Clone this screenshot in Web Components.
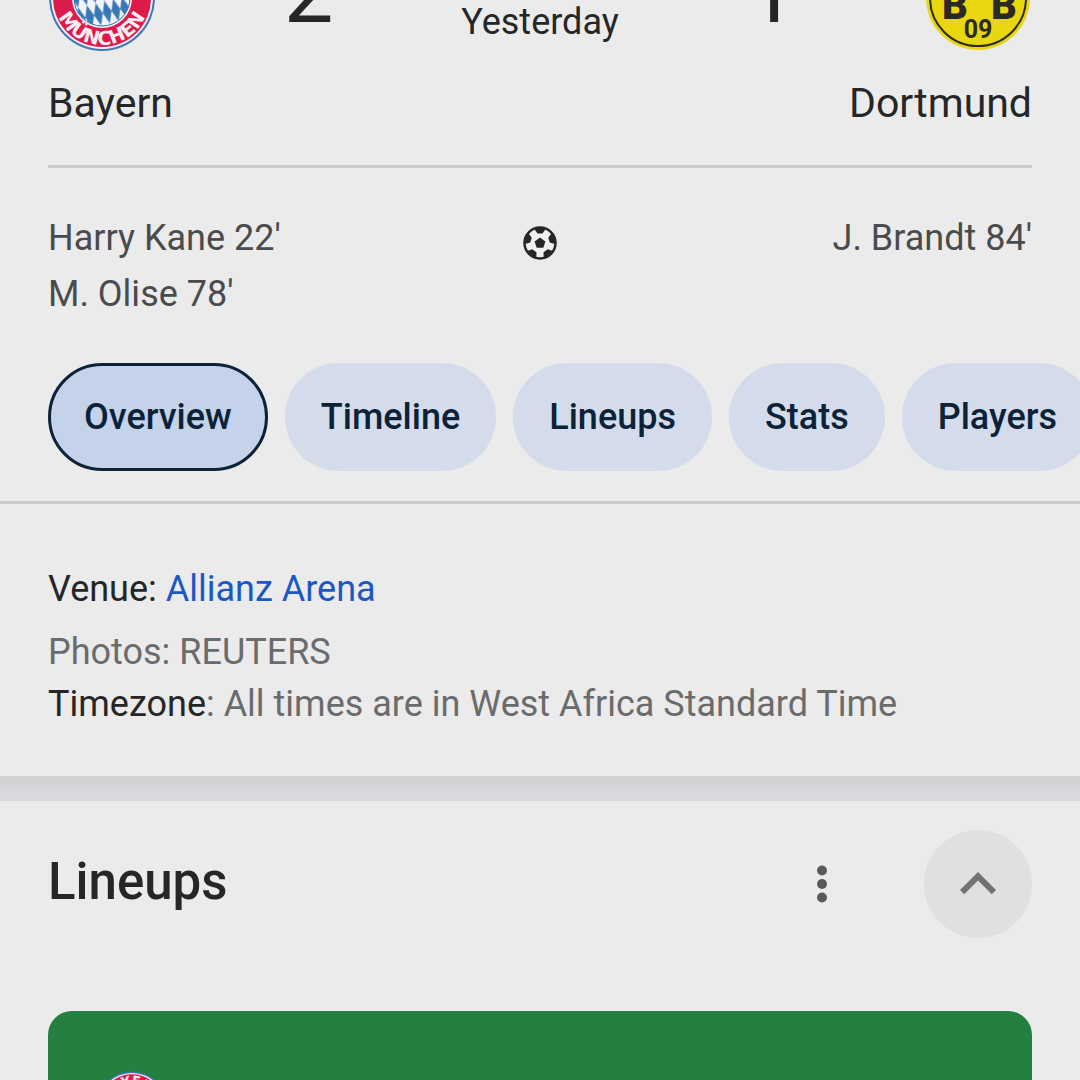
<!DOCTYPE html>
<html lang="en">
<head>
  <meta charset="utf-8">
  <meta name="viewport" content="width=device-width, initial-scale=1">
  <title>Bayern - Dortmund</title>
  <style>
    body {
      margin: 0;
      height: 100vh;
      overflow: hidden;
      background: #ebebeb;
      color: #252627;
      font-family: Roboto, "Liberation Sans", sans-serif;
      font-size: 36px;
    }
  </style>
</head>
<body>
  <match-header>
    <bayern-crest slot="home-crest"></bayern-crest>
    <span slot="home-score">2</span>
    <span slot="day">Yesterday</span>
    <span slot="away-score">1</span>
    <dortmund-crest slot="away-crest"></dortmund-crest>
    <span slot="home-name">Bayern</span>
    <span slot="away-name">Dortmund</span>
  </match-header>

  <goal-list>
    <div slot="home">Harry Kane 22'</div>
    <div slot="home">M. Olise 78'</div>
    <div slot="away">J. Brandt 84'</div>
  </goal-list>

  <tab-bar>
    <tab-chip selected>Overview</tab-chip>
    <tab-chip>Timeline</tab-chip>
    <tab-chip>Lineups</tab-chip>
    <tab-chip>Stats</tab-chip>
    <tab-chip>Players</tab-chip>
  </tab-bar>

  <match-info></match-info>

  <lineup-section>
    <span slot="title">Lineups</span>
    <bayern-crest slot="team"></bayern-crest>
  </lineup-section>

  <script>
    class BayernCrest extends HTMLElement {
      constructor() {
        super();
        const shadow = this.attachShadow({ mode: 'open' });
        shadow.innerHTML = `
          <style>
            :host { display: block; width: 108px; height: 108px; }
            svg { display: block; width: 100%; height: 100%; }
            text {
              font-family: "DejaVu Sans", sans-serif;
              font-weight: 700;
              font-size: 19px;
              fill: #fbeef2;
            }
          </style>
          <svg viewBox="0 0 108 108" role="img" aria-label="Bayern crest">
            <defs>
              <clipPath id="core"><circle cx="54" cy="54" r="28"/></clipPath>
              <pattern id="lozenge" width="9" height="23" patternUnits="userSpaceOnUse" patternTransform="translate(52 58) rotate(-14)">
                <rect width="9" height="23" fill="#f2f4f8"/>
                <path d="M4.500 0 9 11.500 4.500 23 0 11.500Z" fill="#3878b8"/>
              </pattern>
              <path id="top" d="M21 54a33 33 0 0 1 66 0"/>
              <path id="bottom" d="M7 54a47 47 0 0 0 94 0"/>
            </defs>
            <circle cx="54" cy="54" r="53" fill="#3f78b8"/>
            <circle cx="54" cy="54" r="51" fill="#f2eef2"/>
            <circle cx="54" cy="54" r="49" fill="#dc1a4c"/>
            <circle cx="54" cy="54" r="30" fill="#f2eef2"/>
            <g clip-path="url(#core)"><rect x="24" y="24" width="60" height="60" fill="url(#lozenge)"/></g>
            <circle cx="54" cy="54" r="28" fill="none" stroke="#3878b8" stroke-width="1"/>
            <text text-anchor="middle"><textPath href="#top" startOffset="50%">BAYERN</textPath></text>
            <text text-anchor="middle"><textPath href="#bottom" startOffset="50%">MÜNCHEN</textPath></text>
          </svg>
        `;
      }
    }

    class DortmundCrest extends HTMLElement {
      constructor() {
        super();
        const shadow = this.attachShadow({ mode: 'open' });
        shadow.innerHTML = `
          <style>
            :host { display: block; width: 108px; height: 108px; }
            svg { display: block; width: 100%; height: 100%; }
            text {
              font-family: Roboto, "Liberation Sans", sans-serif;
              font-weight: 700;
              fill: #2c2922;
              text-anchor: middle;
            }
            .club { font-size: 40px; font-weight: 900; }
            .year { font-size: 25px; }
          </style>
          <svg viewBox="0 0 108 108" role="img" aria-label="Dortmund crest">
            <circle cx="54" cy="54" r="52" fill="#e8d70f"/>
            <circle cx="54" cy="54" r="48" fill="#e8d70f" stroke="#2c2922" stroke-width="2"/>
            <text class="club" x="31" y="75">B</text>
            <text class="club" x="54" y="56">V</text>
            <text class="club" x="80" y="75">B</text>
            <text class="year" x="54" y="94">09</text>
          </svg>
        `;
      }
    }

    // Score row with both crests, team names below
    class MatchHeader extends HTMLElement {
      constructor() {
        super();
        const shadow = this.attachShadow({ mode: 'open' });
        shadow.innerHTML = `
          <style>
            :host { display: block; margin: -56px 48px 0; border-bottom: 3px solid #c9cbce; }
            .score {
              display: grid;
              grid-template-columns: 108px 1fr auto 1fr 108px;
              grid-template-rows: 108px;
              align-items: end;
            }
            .goals { text-align: center; font-size: 88px; line-height: 120px; }
            .day { line-height: 60px; }
            .names {
              display: flex;
              justify-content: space-between;
              padding: 27px 0 38px;
              font-size: 41px;
              line-height: 48px;
            }
          </style>
          <div class="score">
            <slot name="home-crest"></slot>
            <div class="goals"><slot name="home-score"></slot></div>
            <div class="day"><slot name="day"></slot></div>
            <div class="goals"><slot name="away-score"></slot></div>
            <slot name="away-crest"></slot>
          </div>
          <div class="names">
            <slot name="home-name"></slot>
            <slot name="away-name"></slot>
          </div>
        `;
      }
    }

    class GoalList extends HTMLElement {
      constructor() {
        super();
        const shadow = this.attachShadow({ mode: 'open' });
        shadow.innerHTML = `
          <style>
            :host {
              display: grid;
              grid-template-columns: 1fr auto 1fr;
              padding: 42px 48px 41px;
              color: #4a4b4d;
              line-height: 56px;
            }
            .away { text-align: right; }
            svg { display: block; width: 36px; height: 36px; margin-top: 15px; }
          </style>
          <div><slot name="home"></slot></div>
          <svg viewBox="0 0 36 36" aria-hidden="true">
            <defs><clipPath id="ball"><circle cx="18" cy="18" r="16"/></clipPath></defs>
            <circle cx="18" cy="18" r="15" fill="#f1f1f1"/>
            <path fill="#252627" d="M18 12.500l5.400 4-2.100 6.200h-6.600l-2.100-6.200z"/>
            <g fill="#252627" clip-path="url(#ball)">
              <path id="patch" d="M13 0h10v5l-2.500 3.500h-5L13 5z"/>
              <use href="#patch" transform="rotate(72 18 18)"/>
              <use href="#patch" transform="rotate(144 18 18)"/>
              <use href="#patch" transform="rotate(216 18 18)"/>
              <use href="#patch" transform="rotate(288 18 18)"/>
            </g>
            <circle cx="18" cy="18" r="15.500" fill="none" stroke="#252627" stroke-width="2.500"/>
          </svg>
          <div class="away"><slot name="away"></slot></div>
        `;
      }
    }

    class TabBar extends HTMLElement {
      constructor() {
        super();
        const shadow = this.attachShadow({ mode: 'open' });
        shadow.innerHTML = `
          <style>
            :host { display: block; overflow: hidden; border-bottom: 3px solid #c9cbce; }
            nav { display: flex; gap: 17px; padding: 0 48px 30px; }
          </style>
          <nav aria-label="Match"><slot></slot></nav>
        `;
      }
    }

    class TabChip extends HTMLElement {
      constructor() {
        super();
        const shadow = this.attachShadow({ mode: 'open' });
        shadow.innerHTML = `
          <style>
            :host { display: block; flex: none; }
            button {
              display: block;
              height: 108px;
              padding: 0 33px;
              border: 3px solid transparent;
              border-radius: 54px;
              background: #d4dbea;
              color: #0b2238;
              font: inherit;
              font-weight: 500;
              white-space: nowrap;
            }
            :host([selected]) button { background: #c5d3ea; border-color: #0b2238; }
          </style>
          <button type="button"><slot></slot></button>
        `;
      }
    }

    class MatchInfo extends HTMLElement {
      constructor() {
        super();
        const shadow = this.attachShadow({ mode: 'open' });
        shadow.innerHTML = `
          <style>
            :host { display: block; padding: 49px 48px 47px; color: #6a6b6d; }
            p { margin: 0; line-height: 50px; }
            .venue { line-height: 72px; }
            .photos { line-height: 54px; }
            .label { color: #252627; }
            a { color: #1c58c4; text-decoration: none; }
          </style>
          <p class="venue"><span class="label">Venue: </span><a href="#venue">Allianz Arena</a></p>
          <p class="photos">Photos: REUTERS</p>
          <p><span class="label">Timezone</span>: All times are in West Africa Standard Time</p>
        `;
      }
    }

    class LineupSection extends HTMLElement {
      constructor() {
        super();
        const shadow = this.attachShadow({ mode: 'open' });
        shadow.innerHTML = `
          <style>
            :host { display: block; }
            .band { height: 25px; background: linear-gradient(#d1d1d3 30%, #d8dade 70%); }
            header { display: flex; align-items: center; padding: 29px 48px 73px; }
            h2 { flex: 1; margin: 0; padding-bottom: 4px; font-size: 51px; font-weight: 500; line-height: 56px; }
            button {
              display: grid;
              place-items: center;
              width: 108px;
              height: 108px;
              padding: 0;
              border: 0;
              border-radius: 50%;
              background: none;
              color: #58595b;
            }
            .more { margin-right: 48px; }
            .more svg { width: 54px; height: 54px; }
            .toggle { background: #dfe0e2; color: #717274; }
            .toggle svg { width: 72px; height: 72px; }
            .pitch {
              margin: 0 48px;
              padding: 60px 48px;
              border-radius: 24px;
              background: #238040;
            }
            ::slotted(bayern-crest) { width: 72px; height: 72px; }
          </style>
          <div class="band"></div>
          <header>
            <h2><slot name="title"></slot></h2>
            <button class="more" type="button" aria-label="More options">
              <svg viewBox="0 0 24 24" fill="currentColor"><circle cx="12" cy="6" r="2.200"/><circle cx="12" cy="12" r="2.200"/><circle cx="12" cy="18" r="2.200"/></svg>
            </button>
            <button class="toggle" type="button" aria-label="Collapse" aria-expanded="true">
              <svg viewBox="0 0 24 24" fill="currentColor"><path d="M12 8l-6 6 1.410 1.410L12 10.830l4.590 4.580L18 14z"/></svg>
            </button>
          </header>
          <div class="pitch"><slot name="team"></slot></div>
        `;
      }
    }

    customElements.define('bayern-crest', BayernCrest);
    customElements.define('dortmund-crest', DortmundCrest);
    customElements.define('match-header', MatchHeader);
    customElements.define('goal-list', GoalList);
    customElements.define('tab-bar', TabBar);
    customElements.define('tab-chip', TabChip);
    customElements.define('match-info', MatchInfo);
    customElements.define('lineup-section', LineupSection);
  </script>
</body>
</html>
